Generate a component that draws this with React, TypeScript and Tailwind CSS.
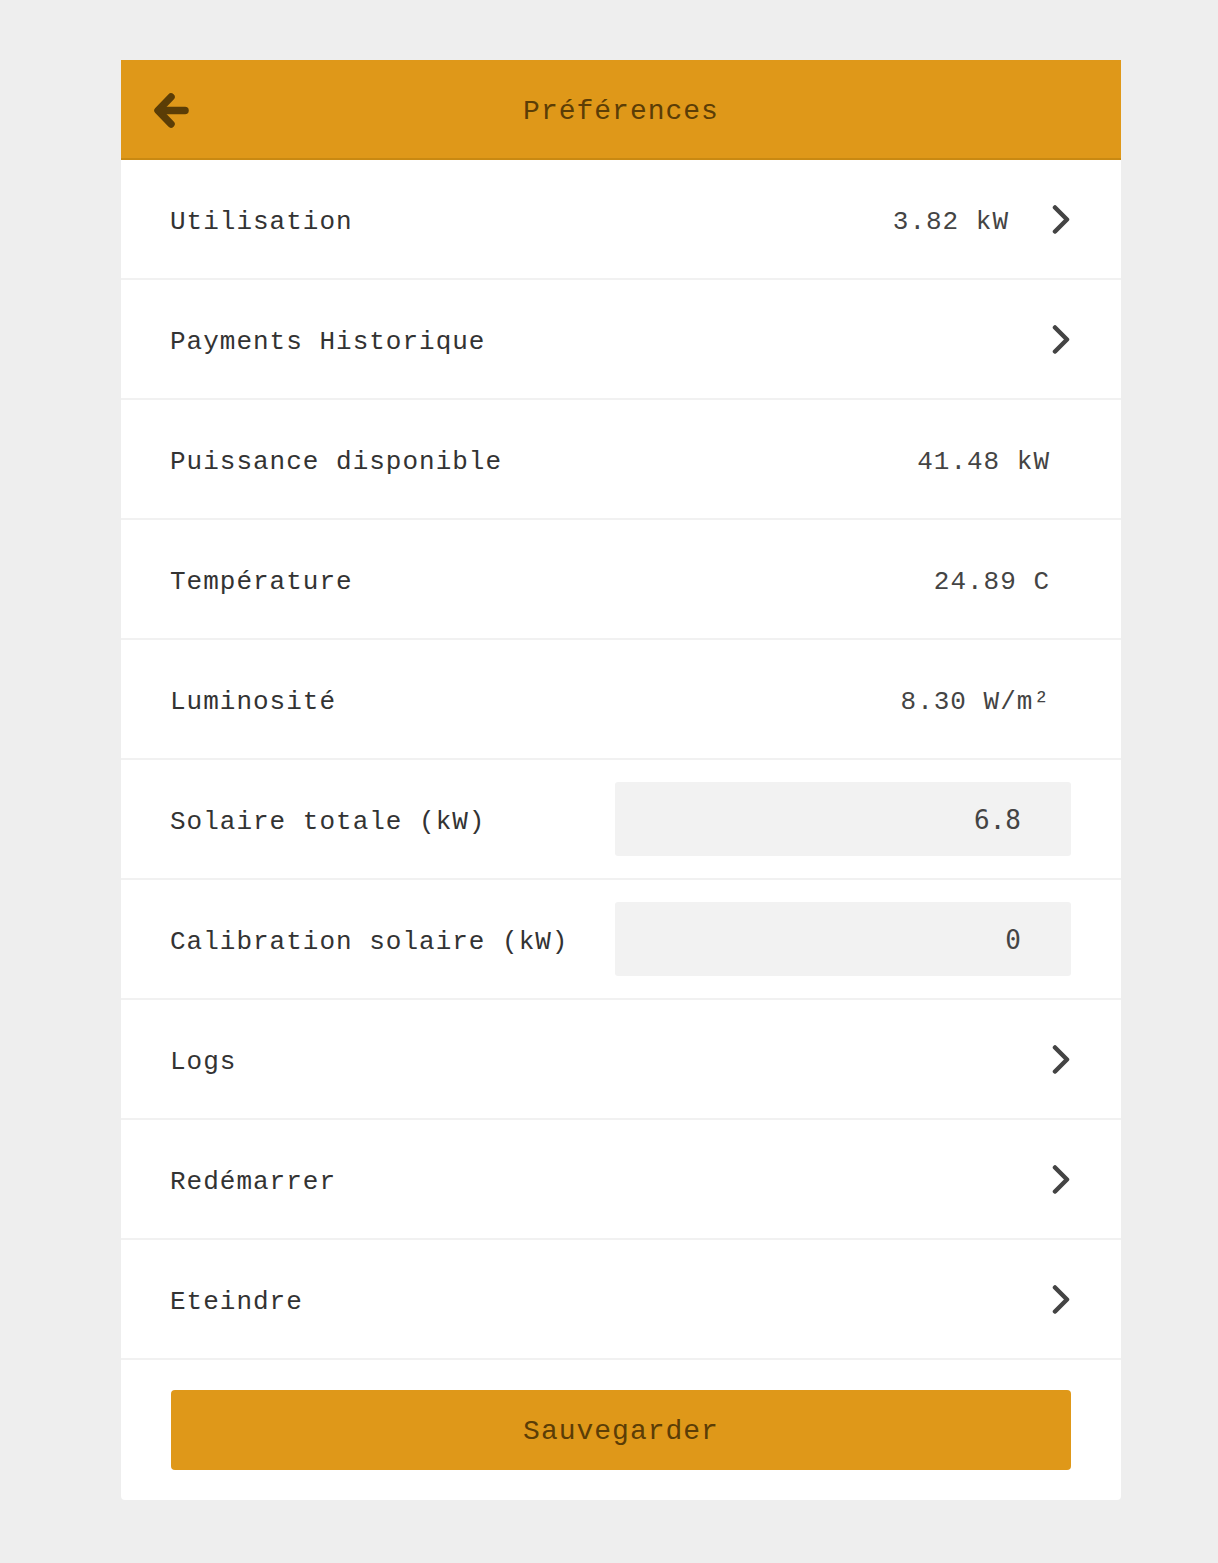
import React from "react";

const mono = { fontFamily: '"Liberation Mono", "Courier New", monospace' };

type Row = {
  label: string;
  value?: string;
  link?: boolean;
  input?: string;
};

const rows: Row[] = [
  { label: "Utilisation", value: "3.82 kW", link: true },
  { label: "Payments Historique", link: true },
  { label: "Puissance disponible", value: "41.48 kW" },
  { label: "Température", value: "24.89 C" },
  { label: "Luminosité", value: "8.30 W/m²" },
  { label: "Solaire totale (kW)", input: "6.8" },
  { label: "Calibration solaire (kW)", input: "0" },
  { label: "Logs", link: true },
  { label: "Redémarrer", link: true },
  { label: "Eteindre", link: true },
];

function Chevron() {
  return (
    <svg width="20" height="30" viewBox="0 0 20 30" className="shrink-0">
      <polyline
        points="4,3.5 16,15.5 4,27.5"
        fill="none"
        stroke="#444444"
        strokeWidth="4.5"
        strokeLinecap="round"
        strokeLinejoin="round"
      />
    </svg>
  );
}

function BackArrow() {
  return (
    <svg width="36" height="38" viewBox="0 0 36 38">
      <g
        fill="none"
        stroke="#5b3d06"
        strokeWidth="7.5"
        strokeLinecap="round"
        strokeLinejoin="round"
      >
        <polyline points="17,5 4,18.5 17,32" />
        <line x1="5" y1="18.5" x2="31" y2="18.5" />
      </g>
    </svg>
  );
}

function SettingsRow({ row }: { row: Row }) {
  return (
    <div className="flex h-[120px] items-center border-b-2 border-[#f1f1f1] pl-[49px] pr-[50px]">
      <span className="flex-1 pt-[7px] text-[26px] tracking-[1px] text-[#333333]" style={mono}>
        {row.label}
      </span>
      {row.input !== undefined && (
        <div
          className="flex h-[74px] w-[456px] items-center justify-end rounded-[3px] bg-[#f2f2f2] pr-[50px] pt-[3px] text-[26px] text-[#444444]"
          style={{ fontFamily: '"DejaVu Sans Mono", monospace' }}
        >
          {row.input}
        </div>
      )}
      {row.value && (
        <span
          className={`pt-[7px] text-[26px] tracking-[1px] text-[#444444] ${row.link ? "mr-[42px]" : "mr-[21px]"}`}
          style={mono}
        >
          {row.value}
        </span>
      )}
      {row.link && <Chevron />}
    </div>
  );
}

export default function App() {
  return (
    <div className="min-h-screen bg-[#eeeeee] pt-[60px] pl-[121px] pb-[63px]">
      <div className="w-[1000px] overflow-hidden rounded-b-[4px] bg-white">
        <div className="grid h-[100px] grid-cols-[1fr_auto_1fr] items-center border-b-2 border-[#c98912] bg-[#df9819]">
          <div className="pl-[33px] pt-[4px]">
            <BackArrow />
          </div>
          <span className="pt-[5px] text-[28px] tracking-[1px] text-[#5b3d06]" style={mono}>
            Préférences
          </span>
          <div />
        </div>
        {rows.map((r) => (
          <SettingsRow key={r.label} row={r} />
        ))}
        <div className="px-[50px] py-[30px]">
          <button
            className="flex h-[80px] w-full items-center justify-center rounded-[4px] bg-[#df9819] pt-[4px] text-[28px] tracking-[1px] text-[#5b3d06]"
            style={mono}
          >
            Sauvegarder
          </button>
        </div>
      </div>
    </div>
  );
}
